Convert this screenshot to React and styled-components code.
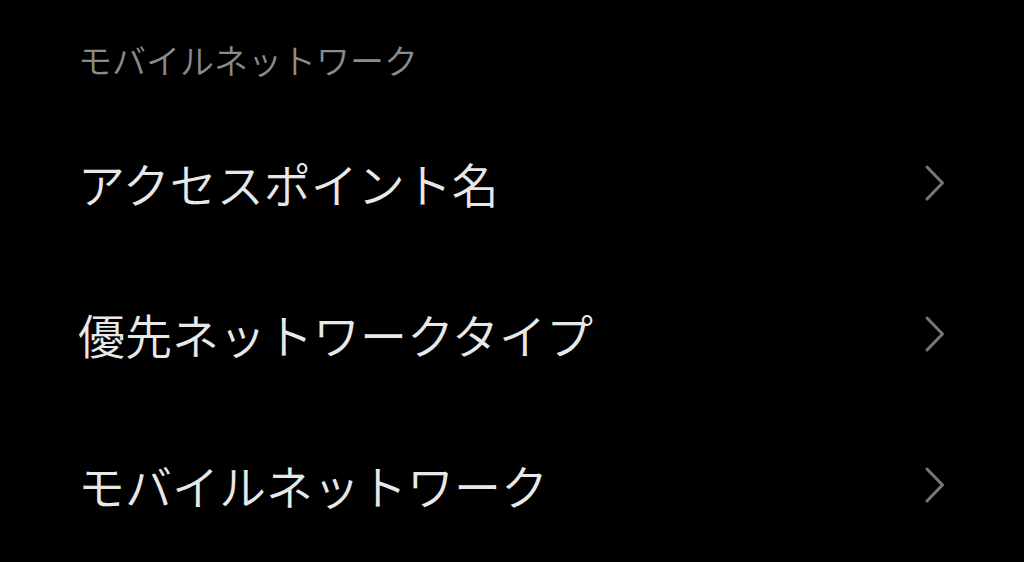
import React from 'react';
import styled, { createGlobalStyle } from 'styled-components';

const GlobalStyle = createGlobalStyle`
  html, body {
    margin: 0;
    padding: 0;
    background: #000;
  }
  body {
    font-family: "Noto Sans CJK JP", "Noto Sans", sans-serif;
  }
`;

const Screen = styled.div`
  width: 1024px;
  height: 562px;
  background: #000;
  overflow: hidden;
`;

const SectionTitle = styled.div`
  padding: 43px 78px 30px;
  font-size: 34px;
  line-height: 34px;
  font-weight: 350;
  color: #8b8b8b;
`;

const Row = styled.div`
  height: 151px;
  display: flex;
  align-items: center;
  justify-content: space-between;
  padding: 0 78px 0 78px;
`;

const Label = styled.span`
  font-size: 47px;
  line-height: 1;
  font-weight: 350;
  color: #e8e8e8;
`;

const Chevron = () => (
  <svg width="22" height="38" viewBox="0 0 22 38" fill="none">
    <path
      d="M3 3 L18.5 19 L3 35"
      stroke="#777"
      strokeWidth="3"
      strokeLinecap="round"
      strokeLinejoin="round"
    />
  </svg>
);

const items = ['アクセスポイント名', '優先ネットワークタイプ', 'モバイルネットワーク'];

const App = () => (
  <Screen>
    <GlobalStyle />
    <SectionTitle>モバイルネットワーク</SectionTitle>
    {items.map((item) => (
      <Row key={item}>
        <Label>{item}</Label>
        <Chevron />
      </Row>
    ))}
  </Screen>
);

export default App;
